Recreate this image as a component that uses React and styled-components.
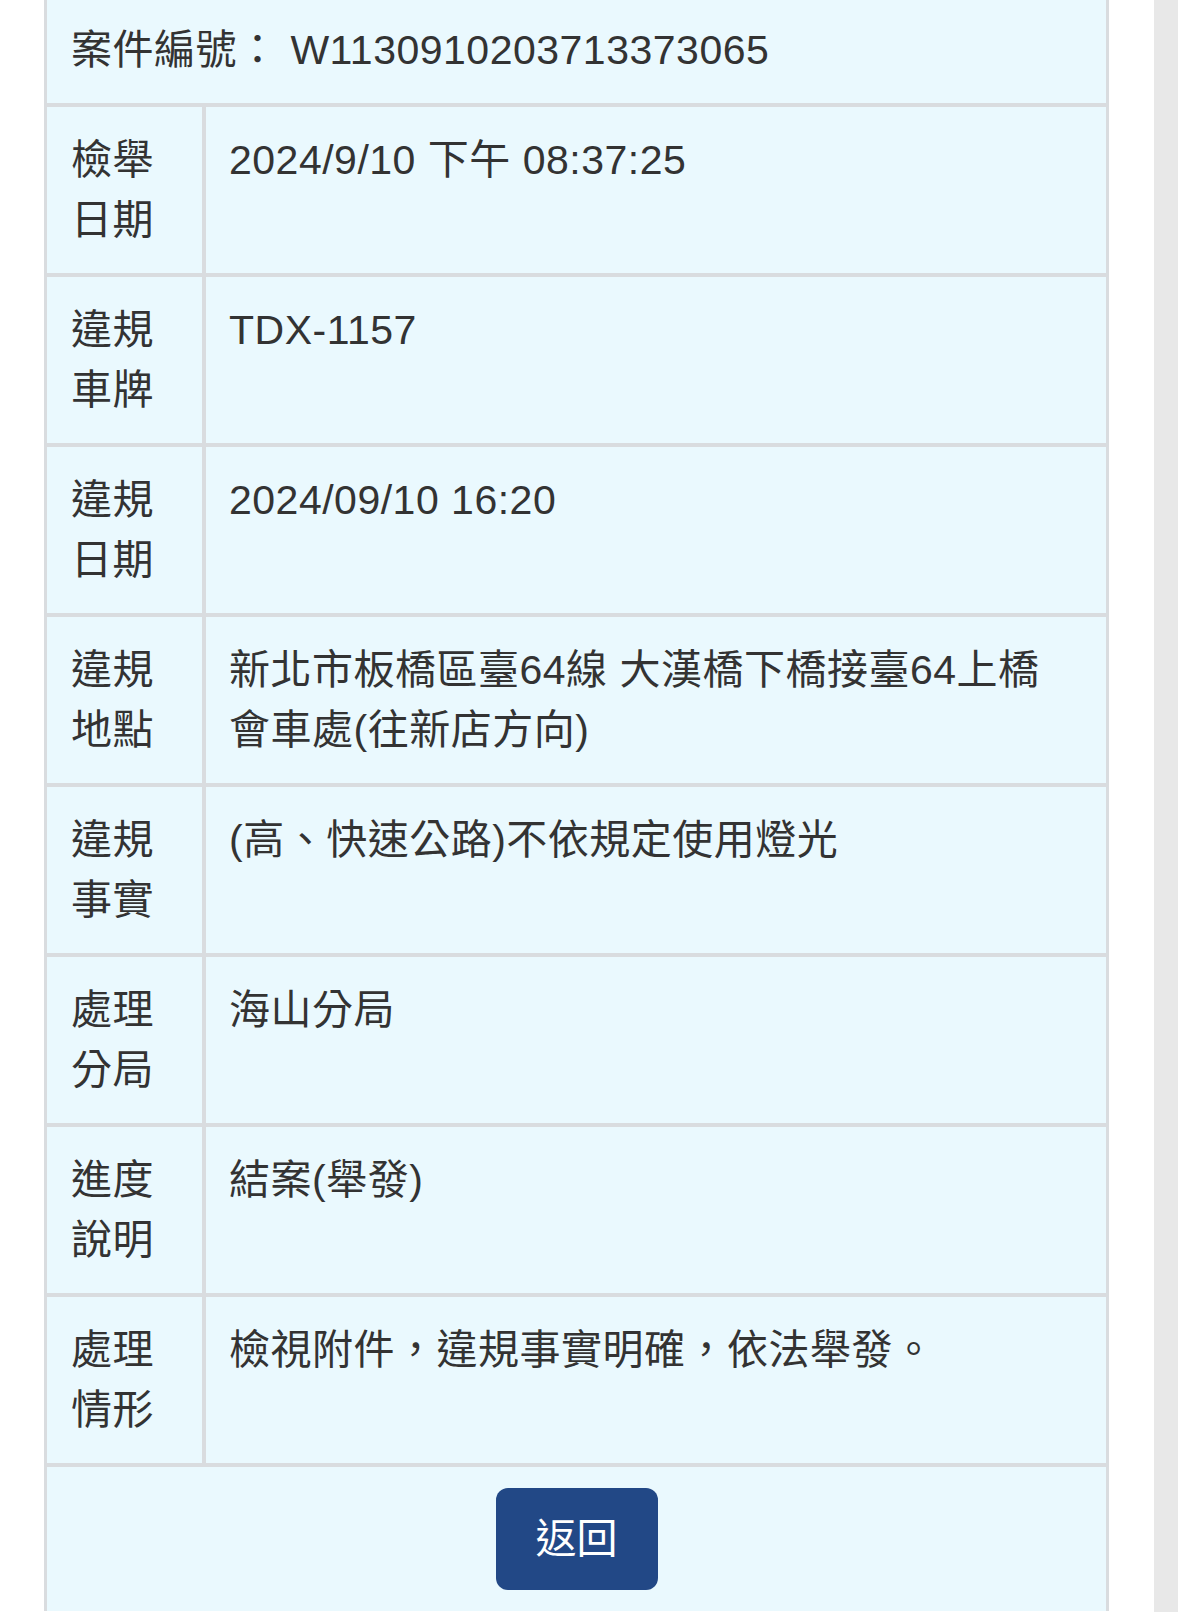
import React from "react";
import styled, { createGlobalStyle } from "styled-components";

const GlobalStyle = createGlobalStyle`
  html, body {
    margin: 0;
    padding: 0;
    background: #ffffff;
  }
  body {
    font-family: "Liberation Sans", "Noto Sans CJK TC", sans-serif;
    color: #333333;
  }
`;

const Page = styled.div`
  display: flex;
  height: 1612px;
  overflow: hidden;
`;

const Content = styled.div`
  flex: 1;
  padding-left: 44px;
  padding-right: 45px;
`;

const Gutter = styled.div`
  width: 24px;
  background: #e8e8e8;
  flex-shrink: 0;
`;

const Table = styled.div`
  border-left: 3px solid #d9dcdf;
  border-right: 3px solid #d9dcdf;
  background: #eaf9fe;
  font-size: 41px;
  line-height: 60px;
  letter-spacing: 0.5px;
`;

const HeaderRow = styled.div`
  padding: 20px 24px 23px;
  border-bottom: 4px solid #d9dcdf;
  white-space: nowrap;
`;

const Row = styled.div`
  display: grid;
  grid-template-columns: 159px 1fr;
  border-bottom: 4px solid #d9dcdf;
`;

const Label = styled.div`
  padding: 23px 20px 23px 24px;
  min-height: 120px;
  border-right: 4px solid #d9dcdf;
`;

const Value = styled.div`
  padding: 23px 40px 23px 23px;
`;

const Footer = styled.div`
  display: flex;
  justify-content: center;
  padding: 21px 0;
`;

const BackButton = styled.button`
  font-family: "Liberation Sans", "Noto Sans CJK TC", sans-serif;
  font-size: 41px;
  line-height: 60px;
  color: #ffffff;
  background: #224886;
  border: none;
  border-radius: 12px;
  padding: 21px 40px;
  cursor: pointer;
`;

const rows = [
  ["檢舉日期", "2024/9/10 下午 08:37:25"],
  ["違規車牌", "TDX-1157"],
  ["違規日期", "2024/09/10 16:20"],
  ["違規地點", "新北市板橋區臺64線 大漢橋下橋接臺64上橋會車處(往新店方向)"],
  ["違規事實", "(高、快速公路)不依規定使用燈光"],
  ["處理分局", "海山分局"],
  ["進度說明", "結案(舉發)"],
  ["處理情形", "檢視附件，違規事實明確，依法舉發。"],
];

export default function App() {
  return (
    <>
      <GlobalStyle />
      <Page>
        <Content>
          <Table>
            <HeaderRow>案件編號： W1130910203713373065</HeaderRow>
            {rows.map(([label, value]) => (
              <Row key={label}>
                <Label>
                  {label.slice(0, 2)}
                  <br />
                  {label.slice(2)}
                </Label>
                <Value>{value}</Value>
              </Row>
            ))}
            <Footer>
              <BackButton>返回</BackButton>
            </Footer>
          </Table>
        </Content>
        <Gutter />
      </Page>
    </>
  );
}
